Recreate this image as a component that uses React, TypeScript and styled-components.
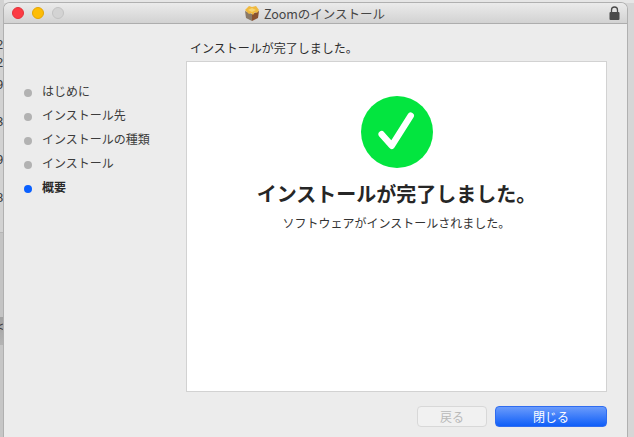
import styled, { createGlobalStyle } from "styled-components";

const GlobalStyle = createGlobalStyle`
    html, body {
        margin: 0;
        padding: 0;
        width: 634px;
        height: 437px;
        overflow: hidden;
        background-color: #d6d6d6;
    }
`;

const jp = `"Noto Sans CJK JP", "Noto Sans", sans-serif`;

const Desktop = styled.div`
    position: relative;
    width: 634px;
    height: 437px;
    padding: 3px 7px 0 4px;
    box-sizing: border-box;
    background:
        linear-gradient(180deg, #d2d2d2 0, #d2d2d2 232px, #a8a8a8 232px, #c4c4c4 233px, #c4c4c4 317px, #a2a2a2 317px, #b4b4b4 345px, #c6c6c6 345px) left top / 4px 100% no-repeat,
        linear-gradient(180deg, #e6e6e6 0, #e6e6e6 3px, #d6d6d6 3px) left top / 100% 100% no-repeat;
    overflow: hidden;
`;

/* scraps of the window behind, only a few pixels of them show */
const BehindText = styled.span<{ $top: number }>`
    position: absolute;
    left: -4px;
    top: ${(p) => p.$top}px;
    font: 13px/14px "Liberation Sans", sans-serif;
    color: #3a3a3a;
`;

const Win = styled.div`
    position: relative;
    height: 434px;
    background-color: #ececec;
    border-radius: 6px 6px 0 0;
    box-shadow: 0 0 0 1px #b0b0b0;
    display: flex;
    flex-direction: column;
    overflow: hidden;
`;

const TitleBar = styled.div`
    height: 20px;
    flex-shrink: 0;
    display: flex;
    align-items: center;
    padding: 0 7px 0 8px;
    background: linear-gradient(#ebebeb, #d2d2d2);
    border-bottom: 1px solid #adadad;
`;

const Lights = styled.div`
    display: flex;
    gap: 8px;
    width: 60px;
`;

const Light = styled.span<{ $color: string; $edge: string }>`
    width: 12px;
    height: 12px;
    border-radius: 50%;
    box-sizing: border-box;
    background-color: ${(p) => p.$color};
    border: 1px solid ${(p) => p.$edge};
`;

const Title = styled.div`
    flex: 1;
    display: flex;
    align-items: center;
    justify-content: center;
    gap: 4px;
    font: 12.5px ${jp};
    color: #454545;
    margin-right: 3px;
`;

const LockSlot = styled.div`
    width: 60px;
    display: flex;
    justify-content: flex-end;
`;

const Body = styled.div`
    flex: 1;
    display: flex;
    min-height: 0;
`;

const Sidebar = styled.ul`
    width: 182px;
    flex-shrink: 0;
    list-style: none;
    margin: 0;
    padding: 54px 0 0 20px;
    box-sizing: border-box;
`;

const Step = styled.li<{ $active?: boolean }>`
    height: 24px;
    display: flex;
    align-items: center;
    gap: 10px;
    font: ${(p) => (p.$active ? 700 : 400)} 12px ${jp};
    color: ${(p) => (p.$active ? "#2a2a2a" : "#3c3c3c")};
`;

const Dot = styled.span<{ $active?: boolean }>`
    width: 8px;
    height: 8px;
    margin-top: 6px;
    border-radius: 50%;
    background-color: ${(p) => (p.$active ? "#0a60ff" : "#b2b2b2")};
`;

const Main = styled.div`
    flex: 1;
    display: flex;
    flex-direction: column;
    padding: 0 20px 0 0;
`;

const Heading = styled.div`
    height: 37px;
    padding: 15px 0 0 4px;
    box-sizing: border-box;
    font: 12px/18px ${jp};
    color: #2c2c2c;
`;

const Card = styled.div`
    height: 331px;
    background-color: #ffffff;
    border: 1px solid #d2d2d2;
    box-sizing: border-box;
    display: flex;
    flex-direction: column;
    align-items: center;
    padding-top: 34px;
`;

const Headline = styled.div`
    margin-top: 12px;
    font: 700 20px/28px ${jp};
    color: #262626;
`;

const Sub = styled.div`
    margin-top: 6px;
    font: 12px/18px ${jp};
    color: #333333;
`;

const Buttons = styled.div`
    display: flex;
    justify-content: flex-end;
    gap: 8px;
    margin-top: 14px;
`;

const Button = styled.div<{ $primary?: boolean }>`
    height: 21px;
    box-sizing: border-box;
    border-radius: 4px;
    display: flex;
    align-items: center;
    justify-content: center;
    font: 12px ${jp};
    width: ${(p) => (p.$primary ? "112px" : "70px")};
    color: ${(p) => (p.$primary ? "#ffffff" : "#b9b9b9")};
    background: ${(p) => (p.$primary ? "linear-gradient(#6a9bfb, #0f5ef8)" : "#f1f1f1")};
    border: 1px solid ${(p) => (p.$primary ? "#2f6cf0" : "#d8d8d8")};
`;

const steps = ["はじめに", "インストール先", "インストールの種類", "インストール"];

const behind = [
    { top: 38, text: "2" },
    { top: 56, text: "2" },
    { top: 78, text: "9" },
    { top: 115, text: "3" },
    { top: 153, text: "9" },
    { top: 191, text: "8" },
    { top: 320, text: "<" },
];

function PackageIcon() {
    return (
        <svg width="16" height="16" viewBox="0 0 16 16">
            <path d="M1 6 L8 9 L8 16 L2 13 Z" fill="#8b7a68" />
            <path d="M8 9 L15 6 L14 13 L8 16 Z" fill="#8a5230" />
            <path d="M1 5 L5 1 L8 2 L12 1 L15 5 L13 8 L11 7 L9 10 L7 8 L5 9 L3 7 Z" fill="#f0b93e" />
            <path d="M4 5 L8 3 L12 5 L8 7 Z" fill="#f7d673" />
        </svg>
    );
}

function LockIcon() {
    return (
        <svg width="11" height="14" viewBox="0 0 11 14">
            <path d="M2.5 6 V4 a3 3 0 0 1 6 0 V6" fill="none" stroke="#4a4a4a" strokeWidth="1.3" />
            <rect x="0.5" y="6" width="10" height="8" rx="1" fill="#4a4a4a" />
        </svg>
    );
}

function CheckBadge() {
    return (
        <svg width="72" height="72" viewBox="0 0 72 72">
            <circle cx="36" cy="36" r="36" fill="#03e53f" />
            <path d="M20.7 38.3 L30.7 49.7 L49.7 19.7" fill="none" stroke="#ffffff" strokeWidth="6.5" strokeLinecap="round" strokeLinejoin="round" />
        </svg>
    );
}

export default function App() {
    return (
        <>
            <GlobalStyle />
            <Desktop>
                {behind.map((b) => (
                    <BehindText key={b.top} $top={b.top}>{b.text}</BehindText>
                ))}
                <Win>
                    <TitleBar>
                        <Lights>
                            <Light $color="#fc3b44" $edge="#e2323b" />
                            <Light $color="#fdbd06" $edge="#e2a505" />
                            <Light $color="#d3d3d3" $edge="#c2c2c2" />
                        </Lights>
                        <Title>
                            <PackageIcon />
                            Zoomのインストール
                        </Title>
                        <LockSlot>
                            <LockIcon />
                        </LockSlot>
                    </TitleBar>
                    <Body>
                        <Sidebar>
                            {steps.map((s) => (
                                <Step key={s}>
                                    <Dot />
                                    {s}
                                </Step>
                            ))}
                            <Step $active>
                                <Dot $active />
                                概要
                            </Step>
                        </Sidebar>
                        <Main>
                            <Heading>インストールが完了しました。</Heading>
                            <Card>
                                <CheckBadge />
                                <Headline>インストールが完了しました。</Headline>
                                <Sub>ソフトウェアがインストールされました。</Sub>
                            </Card>
                            <Buttons>
                                <Button>戻る</Button>
                                <Button $primary>閉じる</Button>
                            </Buttons>
                        </Main>
                    </Body>
                </Win>
            </Desktop>
        </>
    );
}
